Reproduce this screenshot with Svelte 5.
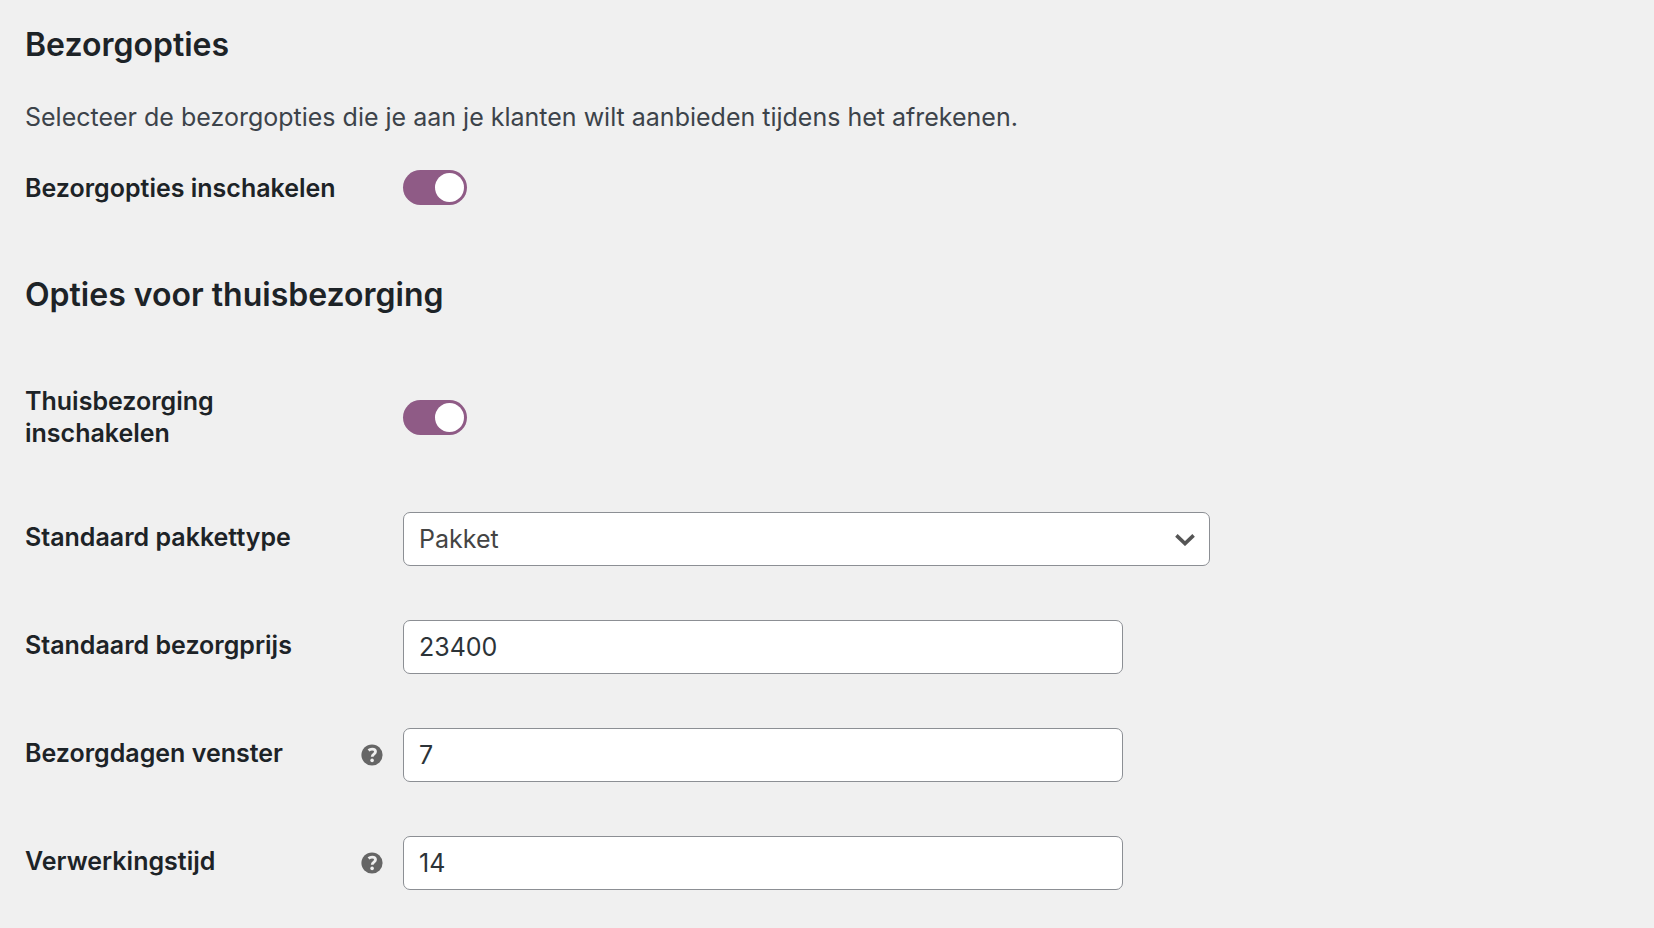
<script>
  let deliveryOptions = $state(true);
  let homeDelivery = $state(true);
  let packageType = $state('package');
  let price = $state('23400');
  let windowDays = $state('7');
  let processingTime = $state('14');
</script>

{#snippet help(subject)}
  <button type="button" class="help" aria-label={subject}>
    <svg viewBox="0 0 22 22" aria-hidden="true">
      <circle cx="11" cy="11" r="10.6" fill="#666" />
      <path
        d="M7.5 6.4C8.6 5.5 9.8 5.1 11.1 5.1C13.3 5.1 14.5 6.1 14.5 7.8C14.5 10.2 11.2 10.1 11.2 12.8"
        fill="none"
        stroke="#f0f0f0"
        stroke-width="2.8"
      />
      <circle cx="11.1" cy="16.4" r="1.8" fill="#f0f0f0" />
    </svg>
  </button>
{/snippet}

<main>
  <section>
    <h2>Bezorgopties</h2>
    <p>Selecteer de bezorgopties die je aan je klanten wilt aanbieden tijdens het afrekenen.</p>
    <div class="row">
      <label for="delivery-options">Bezorgopties inschakelen</label>
      <div class="control">
        <input id="delivery-options" class="toggle" type="checkbox" role="switch" bind:checked={deliveryOptions} />
      </div>
    </div>
  </section>

  <section>
    <h2>Opties voor thuisbezorging</h2>
    <form class="fields">
      <div class="row switch-row">
        <label for="home-delivery">Thuisbezorging inschakelen</label>
        <div class="control">
          <input id="home-delivery" class="toggle" type="checkbox" role="switch" bind:checked={homeDelivery} />
        </div>
      </div>
      <div class="row field-row">
        <label for="package-type">Standaard pakkettype</label>
        <div class="control select">
          <select id="package-type" bind:value={packageType}>
            <option value="package">Pakket</option>
          </select>
          <svg class="chevron" viewBox="0 0 20 12" aria-hidden="true">
            <path d="M1.4 1.4L10 9.6L18.6 1.4" fill="none" stroke="#555" stroke-width="3.6" />
          </svg>
        </div>
      </div>
      <div class="row field-row">
        <label for="price">Standaard bezorgprijs</label>
        <div class="control"><input id="price" class="text" type="text" bind:value={price} /></div>
      </div>
      <div class="row field-row">
        <label for="window-days">Bezorgdagen venster</label>
        {@render help('Bezorgdagen venster')}
        <div class="control"><input id="window-days" class="text" type="text" bind:value={windowDays} /></div>
      </div>
      <div class="row field-row">
        <label for="processing-time">Verwerkingstijd</label>
        {@render help('Verwerkingstijd')}
        <div class="control"><input id="processing-time" class="text" type="text" bind:value={processingTime} /></div>
      </div>
    </form>
  </section>
</main>

<style>
  :global(body) {
    margin: 0;
    background: #f0f0f0;
  }

  main {
    padding: 24px 24px 38px 25px;
    font-family: Inter, 'Liberation Sans', sans-serif;
    font-size: 25px;
    line-height: 32px;
    color: #1d2327;
  }

  section + section {
    margin-top: 69px;
  }

  h2 {
    margin: 0;
    font-size: 32px;
    font-weight: 600;
    line-height: 42px;
  }

  p {
    margin: 32px 0 34px;
    line-height: 38px;
    color: #3c434a;
  }

  .fields {
    display: flex;
    flex-direction: column;
    gap: 54px;
    margin-top: 69px;
  }

  .row {
    display: grid;
    grid-template-columns: 326px 22px minmax(0, 1fr);
    column-gap: 10px;
    align-items: center;
  }

  .switch-row {
    padding-bottom: 9px;
  }

  label {
    font-weight: 600;
  }

  .field-row label {
    padding-bottom: 4px;
  }

  .control {
    grid-column: 3;
    display: flex;
    align-items: center;
    padding-left: 10px;
  }

  .help {
    width: 22px;
    height: 22px;
    padding: 0;
    border: 0;
    background: none;
  }

  .help svg {
    display: block;
  }

  .toggle {
    appearance: none;
    display: flex;
    align-items: center;
    box-sizing: border-box;
    width: 64px;
    height: 35px;
    margin: 0;
    padding: 0 3px;
    border-radius: 18px;
    background: #949494;
  }

  .toggle::before {
    content: '';
    width: 29px;
    height: 29px;
    border-radius: 50%;
    background: #fff;
  }

  .toggle:checked {
    justify-content: flex-end;
    background: #8f5b86;
  }

  .text,
  select {
    box-sizing: border-box;
    width: 100%;
    height: 54px;
    margin: 0;
    padding: 0 15px;
    border: 1px solid #8c8f94;
    border-radius: 7px;
    background: #fff;
    color: #2c3338;
    font: inherit;
  }

  .text {
    max-width: 720px;
  }

  .select {
    position: relative;
    max-width: 807px;
  }

  select {
    appearance: none;
    color: #444;
  }

  .chevron {
    position: absolute;
    right: 15px;
    width: 20px;
    height: 12px;
    margin-top: 2px;
    pointer-events: none;
  }
</style>
